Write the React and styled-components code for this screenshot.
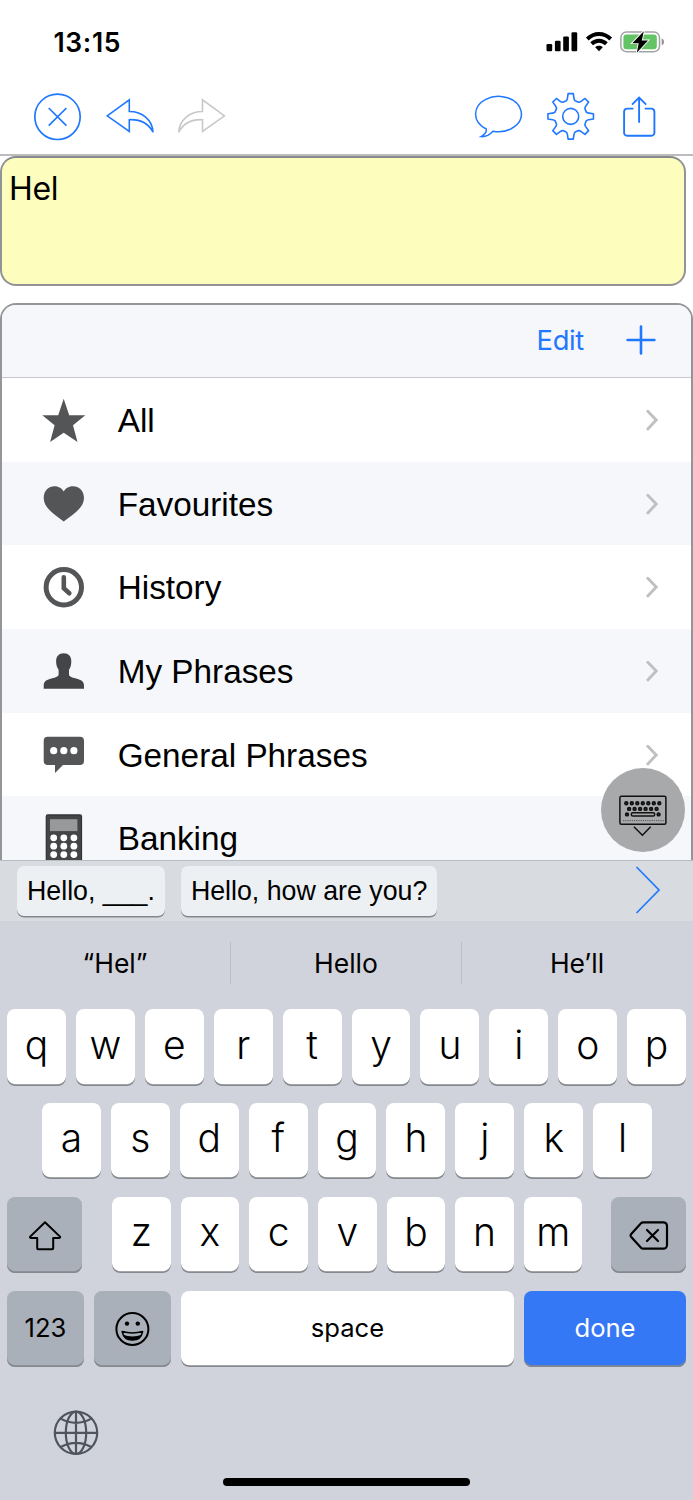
import React from "react";
import styled, { createGlobalStyle } from "styled-components";

const BLUE = "#1f78ff";
const DARK = "#545557";

const Global = createGlobalStyle`
  * { box-sizing: border-box; }
  body { margin: 0; background: #fff; }
  svg { display: block; flex: none; overflow: visible; }
  button { border: 0; margin: 0; padding: 0; background: none; font: inherit; color: inherit; }
`;

const Screen = styled.main`
  width: 693px;
  height: 1500px;
  display: flex;
  flex-direction: column;
  overflow: hidden;
  background: #fff;
  color: #000;
  font-family: Inter, "Liberation Sans", sans-serif;
`;

const StatusBar = styled.header`
  height: 84px;
  flex: none;
  display: flex;
  align-items: center;
  justify-content: space-between;
  padding: 0 28px 0 53.5px;
`;

const Clock = styled.time`
  font-size: 26.5px;
  font-weight: 560;
  line-height: 32px;
  letter-spacing: 0.65px;
`;

const StatusIcons = styled.div`
  display: flex;
  align-items: center;
  gap: 8px;
`;

const Toolbar = styled.nav`
  height: 72px;
  flex: none;
  display: flex;
  justify-content: space-between;
  padding: 9px 26px 0 33px;
  border-bottom: 2px solid #bcbcbd;
`;

const ToolGroup = styled.div`
  display: flex;
  gap: 24px;
`;

const ToolButton = styled.button`
  width: 48px;
  height: 48px;
  color: ${(p) => (p.$muted ? "#c6c8ca" : BLUE)};
`;

const Message = styled.div`
  width: 686px;
  height: 130px;
  flex: none;
  margin-bottom: 17px;
  padding: 11px 7px;
  border: 2px solid #929396;
  border-top-color: #88898c;
  border-radius: 16px;
  background: #fdfebe;
  font-size: 32px;
  line-height: 39px;
  letter-spacing: -0.3px;
`;

const Panel = styled.section`
  position: relative;
  height: 557px;
  flex: none;
  overflow: hidden;
  border: 2px solid #949597;
  border-bottom: 0;
  border-radius: 16px 16px 0 0;
`;

const PanelHeader = styled.div`
  height: 73px;
  display: flex;
  align-items: center;
  justify-content: flex-end;
  gap: 43px;
  padding: 0 36px 2px 0;
  background: #f6f7fa;
  border-bottom: 1.5px solid #c6c7ca;
  color: ${BLUE};
  font-size: 27.3px;
  letter-spacing: -0.3px;
`;

const Row = styled.div`
  height: 83.7px;
  display: flex;
  align-items: center;
  padding: 0 33.5px 0 40px;
  background: ${(p) => (p.$shaded ? "#f6f7fa" : "#fff")};
`;

const RowLabel = styled.span`
  flex: 1;
  margin-left: 31.7px;
  padding-top: 2px;
  font-family: "Liberation Sans", Arial, sans-serif;
  font-size: 33.3px;
  line-height: 40px;
`;

const HideKeyboard = styled.button`
  position: absolute;
  right: 6.5px;
  bottom: 8px;
  width: 84px;
  height: 84px;
  border-radius: 50%;
  background: #a8a9ab;
`;

const PhraseBar = styled.div`
  height: 61px;
  flex: none;
  display: flex;
  align-items: flex-start;
  gap: 16px;
  padding: 5px 33.5px 0 17px;
  border-top: 1.5px solid #b9bcc0;
  background: #d8dbdf;
`;

const Phrase = styled.button`
  height: 50px;
  padding: 0 10px;
  border-radius: 7px;
  background: #ecf0f2;
  box-shadow: 0 1.5px 0 #84888b;
  font-family: "Liberation Sans", Arial, sans-serif;
  font-size: 26.75px;
  line-height: 50px;
  white-space: nowrap;
`;

const MorePhrases = styled.button`
  margin-left: auto;
  color: ${BLUE};
`;

const Keyboard = styled.section`
  flex: 1;
  display: flex;
  flex-direction: column;
  background: #d0d3db;
`;

const Suggestions = styled.div`
  height: 88.4px;
  display: flex;
  align-items: center;
  padding: 0 1px 4px 0;
`;

const Suggestion = styled.div`
  flex: 1;
  height: 42px;
  text-align: center;
  font-size: 26.5px;
  line-height: 43px;
  border-left: ${(p) => (p.$first ? "0" : "1.5px solid #b9bdc6")};
`;

const Keys = styled.div`
  display: flex;
  flex-direction: column;
  gap: 17.5px;
`;

const KeyRow = styled.div`
  display: flex;
  gap: 10px;
  padding: 0 ${(p) => p.$right ?? 7}px 0 ${(p) => p.$left ?? 7}px;
`;

const Key = styled.button`
  height: 76.3px;
  flex: ${(p) => (p.$width ? `0 0 ${p.$width}px` : "1 1 0")};
  display: flex;
  align-items: center;
  justify-content: center;
  margin: 0 ${(p) => p.$after ?? 0}px 0 ${(p) => p.$before ?? 0}px;
  padding-bottom: ${(p) => (p.$icon ? 0 : p.$text ? 3 : 7)}px;
  border-radius: 8px;
  background: ${(p) => (p.$tone === "grey" ? "#a9b0ba" : p.$tone === "blue" ? "#3478f6" : "#fff")};
  color: ${(p) => (p.$tone === "blue" ? "#fff" : "#000")};
  box-shadow: inset 0 -1.8px 0 #85888d;
  font-size: ${(p) => (p.$text ? 25.6 : 39)}px;
  font-weight: ${(p) => (p.$text ? 400 : 340)};
`;

const KeyboardFooter = styled.footer`
  flex: 1;
  display: flex;
  flex-direction: column;
  justify-content: space-between;
  padding: 44px 0 14px 54px;
  color: #4f545e;
`;

const HomeIndicator = styled.div`
  width: 247px;
  height: 8px;
  margin-left: 169px;
  border-radius: 4px;
  background: #000;
`;

function Icon({ w = 48, h = 48, sw = 1.5, children }) {
  return (
    <svg width={w} height={h} viewBox={`0 0 ${w} ${h}`} fill="none" stroke="currentColor" strokeWidth={sw}>
      {children}
    </svg>
  );
}

const gearPath = (() => {
  const at = (r, deg) => {
    const a = (deg * Math.PI) / 180;
    return `${(23.7 + r * Math.sin(a)).toFixed(2)} ${(23.4 - r * Math.cos(a)).toFixed(2)}`;
  };
  let d = "";
  for (let i = 0; i < 8; i++) {
    const c = i * 45;
    d += `${i ? "L" : "M"}${at(16.2, c - 16.2)}Q${at(16.9, c - 12)} ${at(18.4, c - 10.3)}L${at(22.9, c - 6.5)}L${at(22.9, c + 6.5)}L${at(18.4, c + 10.3)}Q${at(16.9, c + 12)} ${at(16.2, c + 16.2)}`;
  }
  return d + "Z";
})();

const Signal = () => (
  <svg width="32" height="20" viewBox="0 0 32 20">
    <rect x="0.5" y="12" width="5.7" height="7.3" rx="1.2" />
    <rect x="8.9" y="8.7" width="5.7" height="10.6" rx="1.2" />
    <rect x="17.2" y="4.4" width="5.7" height="14.9" rx="1.2" />
    <rect x="25.5" y="0.3" width="5.7" height="19" rx="1.2" />
  </svg>
);

const Wifi = () => (
  <svg width="26" height="20" viewBox="0 0 26 20" fill="none" stroke="#000" strokeWidth="3.9">
    <path d="M1.3 7C8 0.3 18 0.3 24.7 7" />
    <path d="M5.6 11.8C10 7.7 16 7.7 20.4 11.8" />
    <path d="M9.2 15.2C11.4 13.3 14.6 13.3 16.8 15.2L13 19.2Z" fill="#000" stroke="none" />
  </svg>
);

const Battery = () => (
  <svg width="45" height="22" viewBox="0 0 45 22">
    <rect x="0.9" y="1.1" width="38.6" height="19.6" rx="5.5" fill="#fff" stroke="#a2a3a5" strokeWidth="1.5" />
    <rect x="3.4" y="3.6" width="33.4" height="14.6" rx="3" fill="#63c466" />
    <path d="M41.7 7.5C44.8 8.3 44.8 13.5 41.7 14.3Z" fill="#929395" />
    <path d="M23.8 0.2L12.3 12.2H18.7L16.8 21.8L28 9.5H21.8Z" fill="#000" stroke="#fff" strokeWidth="1.8" paintOrder="stroke" />
  </svg>
);

const listIcons = {
  star: <path d="M21.7 0.8L27.2 17.2H43.3L31 27.3L35.5 44L21.7 34.8L8.1 44L12.6 27.3L0.3 17.2H16.2Z" />,
  heart: (
    <path d="M21.7 39.5C14 33.5 1.7 26.5 1.7 16C1.7 8.5 6.8 4.2 12.5 4.2C17 4.2 20 6.5 21.7 9.4C23.4 6.5 26.4 4.2 31 4.2C36.8 4.2 42 8.5 42 16C42 26.5 29.4 33.5 21.7 39.5Z" />
  ),
  clock: (
    <g fill="none" stroke={DARK}>
      <circle cx="21.8" cy="22.2" r="17.7" strokeWidth="5" />
      <path d="M21.8 12.3V23.3L27.3 28.3" strokeWidth="4.6" strokeLinecap="round" />
    </g>
  ),
  person: (
    <path
      fill="#444547"
      d="M21.7 4.3C26.6 4.3 29.3 7.5 29.3 12.2C29.3 15.8 28.6 18.4 27 20.8V25.4C27 27.5 29.5 28.2 34 29.4C39.5 31 42 32.3 42 36.8V39.8H1.7V36.8C1.7 32.3 4 31 9.5 29.4C14 28.2 16.6 27.5 16.6 25.4V20.8C15 18.4 14.1 15.8 14.1 12.2C14.1 7.5 16.8 4.3 21.7 4.3Z"
    />
  ),
  speech: (
    <>
      <path d="M5.7 3.7H38A4 4 0 0 1 42 7.7V27.9A4 4 0 0 1 38 31.9H21L13 40V31.9H5.7A4 4 0 0 1 1.7 27.9V7.7A4 4 0 0 1 5.7 3.7Z" />
      <g fill="#fff">
        <circle cx="11.7" cy="17.7" r="3.6" />
        <circle cx="21.8" cy="17.7" r="3.6" />
        <circle cx="31.9" cy="17.7" r="3.6" />
      </g>
    </>
  ),
  calculator: (
    <>
      <rect x="4.3" y="-1.1" width="35.2" height="50" rx="1.5" fill="#444547" stroke="#2f3032" strokeWidth="1.2" />
      <rect x="8" y="3.2" width="27.4" height="11.9" fill="#98999b" />
      <g fill="#fff">
        {[21.8, 30.2, 38.6].map((y) =>
          [11.7, 21.8, 31.9].map((x) => <circle key={`${x}-${y}`} cx={x} cy={y} r="3.4" />)
        )}
      </g>
    </>
  ),
};

const categories = [
  ["star", "All"],
  ["heart", "Favourites"],
  ["clock", "History"],
  ["person", "My Phrases"],
  ["speech", "General Phrases"],
  ["calculator", "Banking"],
];

function Category({ icon, label, shaded, last }) {
  return (
    <Row $shaded={shaded}>
      <svg width="44" height="44" viewBox="0 0 44 44" fill={DARK}>{listIcons[icon]}</svg>
      <RowLabel>{label}</RowLabel>
      {!last && (
        <svg width="12" height="22" viewBox="0 0 12 22" fill="none" stroke="#bfc0c3" strokeWidth="2.9" strokeLinecap="round">
          <path d="M1.8 2.3L10.2 11.1L1.8 19.9" />
        </svg>
      )}
    </Row>
  );
}

const KeyboardDown = () => (
  <svg width="84" height="84" viewBox="0 0 84 84" fill="none" stroke="#111" strokeWidth="1.5">
    <rect x="18.9" y="28.2" width="46" height="28" rx="1.5" />
    <g fill="#333" strokeWidth="1.6">
      {[0, 1, 2, 3, 4, 5, 6].map((i) => <circle key={i} cx={25.3 + i * 5.5} cy="35.3" r="1.4" />)}
      {[0, 1, 2, 3, 4, 5].map((i) => <circle key={i} cx={28.1 + i * 5.5} cy="40.9" r="1.4" />)}
      <circle cx="26" cy="46.4" r="1.4" />
      <circle cx="57.6" cy="46.4" r="1.4" />
    </g>
    <rect x="30.3" y="44.7" width="23.4" height="3.3" rx="1.6" />
    <path d="M22 52.6H63" stroke="#555" strokeWidth="1" strokeDasharray="1.2 1" />
    <path d="M32.9 58.8L41.4 67.2L49.7 58.8" />
  </svg>
);

export default function App() {
  return (
    <Screen>
      <Global />
      <StatusBar>
        <Clock>13:15</Clock>
        <StatusIcons>
          <Signal />
          <Wifi />
          <Battery />
        </StatusIcons>
      </StatusBar>

      <Toolbar>
        <ToolGroup>
          <ToolButton aria-label="Clear">
            <Icon sw={1.7}>
              <circle cx="24.5" cy="23.8" r="22.7" />
              <path d="M15.7 15L33.4 32.7M33.4 15L15.7 32.7" />
            </Icon>
          </ToolButton>
          <ToolButton aria-label="Undo">
            <Icon sw={1.6}>
              <path d="M2.2 22.8L24.3 6.8V18.5C37.5 18.5 47.5 27 48 39.2C43.5 30.5 36 26.2 24.3 26.7V38.5Z" />
            </Icon>
          </ToolButton>
          <ToolButton $muted aria-label="Redo">
            <Icon sw={1.6}>
              <path d="M47.5 22.8L25.5 6.8V18.5C12.3 18.5 2.3 27 1.8 39.2C6.3 30.5 13.8 26.2 25.5 26.7V38.5Z" />
            </Icon>
          </ToolButton>
        </ToolGroup>
        <ToolGroup>
          <ToolButton aria-label="Speak">
            <Icon sw={1.5}>
              <path d="M11.3 36C11.7 39 9.5 41.8 6.1 43.6C10.8 43.9 14.6 42 18 38.2A22.9 17.7 0 1 0 11.3 36Z" />
            </Icon>
          </ToolButton>
          <ToolButton aria-label="Settings">
            <Icon sw={1.6}>
              <path d={gearPath} strokeLinejoin="round" />
              <circle cx="23.7" cy="23.4" r="8" />
            </Icon>
          </ToolButton>
          <ToolButton aria-label="Share">
            <Icon sw={1.9}>
              <path d="M14.4 15.6H8.2A3 3 0 0 0 5.1 18.7V39.7A3 3 0 0 0 8.2 42.8H32.3A3 3 0 0 0 35.4 39.7V18.7A3 3 0 0 0 32.3 15.6H25.7" />
              <path d="M20.1 29.8V4.6M13 11.7L20.1 4.6L27.2 11.7" />
            </Icon>
          </ToolButton>
        </ToolGroup>
      </Toolbar>

      <Message>Hel</Message>

      <Panel>
        <PanelHeader>
          <span>Edit</span>
          <Icon w={28} h={28} sw={2.6}>
            <path d="M14 0.6V27.4M0.6 14H27.4" strokeLinecap="round" />
          </Icon>
        </PanelHeader>
        {categories.map(([icon, label], i) => (
          <Category key={label} icon={icon} label={label} shaded={i % 2 === 1} last={i === 5} />
        ))}
        <HideKeyboard aria-label="Hide keyboard">
          <KeyboardDown />
        </HideKeyboard>
      </Panel>

      <PhraseBar>
        <Phrase>Hello, ___.</Phrase>
        <Phrase>Hello, how are you?</Phrase>
        <MorePhrases aria-label="More phrases">
          <Icon w={24} h={48} sw={1.7}>
            <path d="M0.5 1L23 24L0.5 47" />
          </Icon>
        </MorePhrases>
      </PhraseBar>

      <Keyboard>
        <Suggestions>
          <Suggestion $first>“Hel”</Suggestion>
          <Suggestion>Hello</Suggestion>
          <Suggestion>He’ll</Suggestion>
        </Suggestions>
        <Keys>
          <KeyRow>
            {[..."qwertyuiop"].map((c) => <Key key={c}>{c}</Key>)}
          </KeyRow>
          <KeyRow $left={42} $right={41}>
            {[..."asdfghjkl"].map((c) => <Key key={c}>{c}</Key>)}
          </KeyRow>
          <KeyRow>
            <Key $tone="grey" $icon $width={75} $after={20} aria-label="Shift">
              <Icon w={34} h={30} sw={2}>
                <path d="M17 2.2L32 16.6C32.4 17.2 32.2 17.9 31.4 17.9H25.2V28.2Q25.2 29.2 24.2 29.2H10.2Q9.2 29.2 9.2 28.2V17.9H2.8C1.9 17.9 1.7 17.2 2.2 16.6Z" strokeLinejoin="round" />
              </Icon>
            </Key>
            {[..."zxcvbnm"].map((c) => <Key key={c}>{c}</Key>)}
            <Key $tone="grey" $icon $width={75} $before={18.5} aria-label="Delete">
              <Icon w={40} h={30} sw={2.2}>
                <path d="M15.2 2.3H35.3A3.7 3.7 0 0 1 39 6V25A3.7 3.7 0 0 1 35.3 28.7H15.2Q13.9 28.7 13 27.8L3 16.7Q2 15.5 3 14.3L13 3.2Q13.9 2.3 15.2 2.3Z" />
                <path d="M19 10L30 21M30 10L19 21" strokeLinecap="round" />
              </Icon>
            </Key>
          </KeyRow>
          <KeyRow>
            <Key $tone="grey" $text $width={77}>123</Key>
            <Key $tone="grey" $icon $width={77} aria-label="Emoji">
              <Icon w={36} h={36} sw={2}>
                <circle cx="17.4" cy="18" r="16" />
                <g fill="currentColor" stroke="none">
                  <circle cx="12" cy="12.6" r="2.2" />
                  <circle cx="22.8" cy="12.6" r="2.2" />
                </g>
                <path d="M7.2 20.6Q17.4 23.4 27.6 20.6Q26 29 17.4 29Q8.8 29 7.2 20.6Z" strokeWidth="1.6" strokeLinejoin="round" />
                <path d="M8 23.8Q17.4 27 26.8 23.8Q24.4 29.2 17.4 29.2Q10.4 29.2 8 23.8Z" fill="currentColor" stroke="none" />
              </Icon>
            </Key>
            <Key $text>space</Key>
            <Key $tone="blue" $text $width={162}>done</Key>
          </KeyRow>
        </Keys>
        <KeyboardFooter>
          <Icon w={44} h={44} sw={2.2}>
            <circle cx="22" cy="21.8" r="21.2" />
            <ellipse cx="22" cy="21.8" rx="10.2" ry="21.2" />
            <path d="M22 0.6V43M0.8 21.8H43.2M6.7 7.6Q22 16 37.3 7.6M6.7 36Q22 27.6 37.3 36" />
          </Icon>
          <HomeIndicator />
        </KeyboardFooter>
      </Keyboard>
    </Screen>
  );
}
